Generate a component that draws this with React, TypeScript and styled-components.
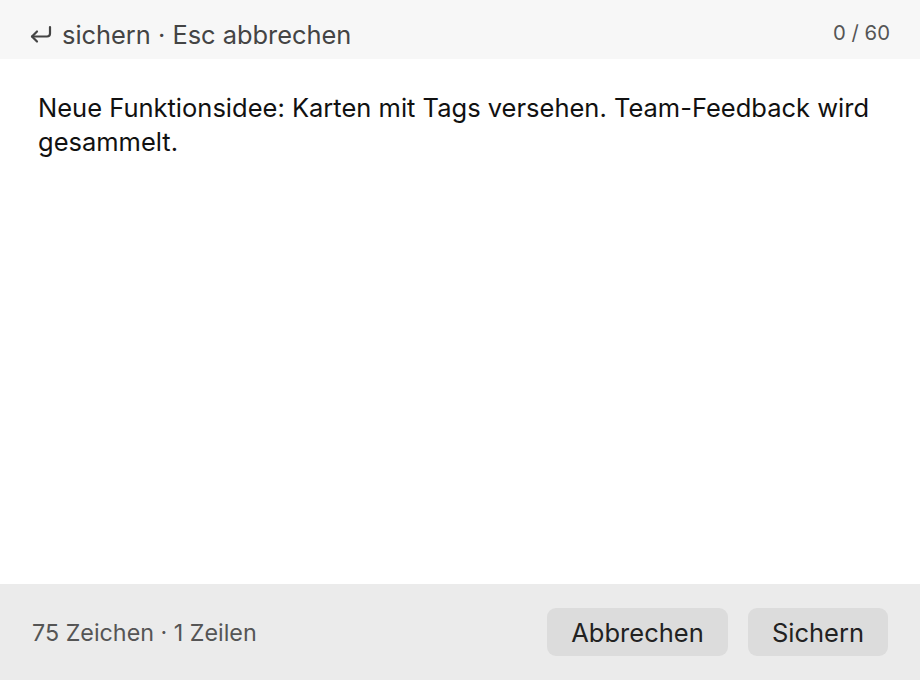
import React from 'react';
import styled, { createGlobalStyle } from 'styled-components';

const GlobalStyle = createGlobalStyle`
  html, body {
    margin: 0;
    padding: 0;
    background: #ffffff;
  }
  body {
    font-family: Inter, "Noto Sans", "Liberation Sans", sans-serif;
  }
`;

const Editor = styled.div`
  width: 920px;
  height: 680px;
  display: flex;
  flex-direction: column;
  background: #ffffff;
`;

const HintBar = styled.div`
  height: 59px;
  box-sizing: border-box;
  padding: 9px 30px 0 30px;
  display: flex;
  align-items: center;
  justify-content: space-between;
  background: #f7f7f7;
`;

const Hint = styled.span`
  font-size: 25.4px;
  color: #444;
  display: flex;
  align-items: center;
  gap: 10px;
`;

const Counter = styled.span`
  font-size: 20.3px;
  color: #555;
  margin-top: -3px;
`;

const Body = styled.div`
  flex: 1;
  padding: 32px 38px 0 38px;
  box-sizing: border-box;
  font-size: 25.5px;
  line-height: 34px;
  color: #111;
`;

const Footer = styled.div`
  height: 96px;
  box-sizing: border-box;
  padding: 0 32px;
  display: flex;
  align-items: center;
  justify-content: space-between;
  background: #ebebeb;
`;

const Stats = styled.span`
  font-size: 23.3px;
  color: #555;
`;

const Actions = styled.div`
  display: flex;
  gap: 20px;
`;

const Button = styled.button<{ $width: number }>`
  width: ${(p) => p.$width}px;
  height: 48px;
  border: none;
  border-radius: 9px;
  background: #dcdcdc;
  color: #222;
  font-family: inherit;
  font-size: 25.5px;
  cursor: pointer;
`;

const ReturnIcon = () => (
  <svg width="22" height="19" viewBox="0 0 22 19" fill="none" stroke="#444" strokeWidth="2.2" strokeLinecap="round" strokeLinejoin="round">
    <path d="M20 2v6.5a3 3 0 0 1-3 3H2" />
    <path d="M7 6.5L2 11.5l5 5" />
  </svg>
);

const text = 'Neue Funktionsidee: Karten mit Tags versehen. Team-Feedback wird gesammelt.';

export default function App() {
  return (
    <>
      <GlobalStyle />
      <Editor>
        <HintBar>
          <Hint>
            <ReturnIcon />
            sichern · Esc abbrechen
          </Hint>
          <Counter>0 / 60</Counter>
        </HintBar>
        <Body>{text}</Body>
        <Footer>
          <Stats>{text.length} Zeichen · 1 Zeilen</Stats>
          <Actions>
            <Button $width={181}>Abbrechen</Button>
            <Button $width={140}>Sichern</Button>
          </Actions>
        </Footer>
      </Editor>
    </>
  );
}
